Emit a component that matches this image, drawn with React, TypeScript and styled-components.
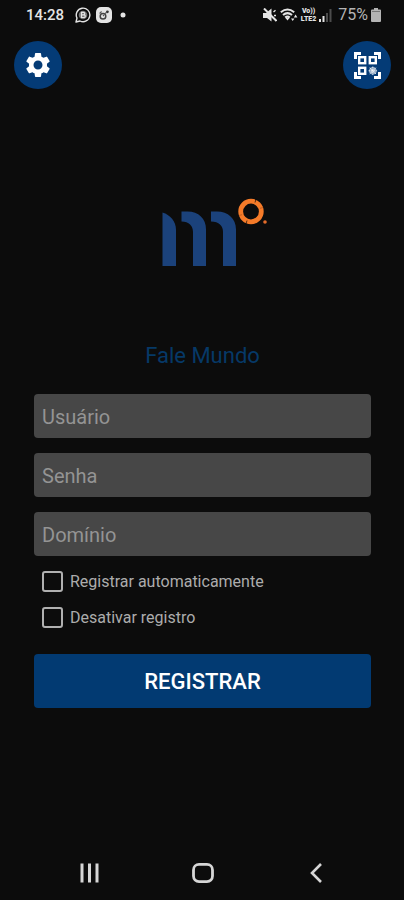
import React from "react";
import styled, { createGlobalStyle } from "styled-components";
import { MdSettings } from "react-icons/md";

const GlobalStyle = createGlobalStyle`
  *, *::before, *::after { box-sizing: border-box; }
  body {
    margin: 0;
    background: #0c0c0c;
    font-family: Roboto, "Liberation Sans", sans-serif;
  }
`;

const Screen = styled.div`
  min-height: 100vh;
  display: flex;
  flex-direction: column;
  background: #0c0c0c;
`;

const StatusBar = styled.header`
  display: flex;
  align-items: center;
  justify-content: space-between;
  height: 30px;
  padding: 0 23px 0 26px;
  color: #e4e4e4;
`;

const StatusGroup = styled.div<{ $gap: number }>`
  display: flex;
  align-items: center;
  gap: ${(p) => p.$gap}px;
`;

const Clock = styled.time`
  margin-right: 6px;
  font-size: 15px;
  line-height: 20px;
  font-weight: 500;
`;

const Battery = styled.span`
  margin-left: 3px;
  font-size: 16px;
  line-height: 20px;
  color: #b4b4b4;
`;

const Network = styled.span`
  display: flex;
  flex-direction: column;
  align-items: center;
  font-size: 7px;
  line-height: 8px;
  font-weight: 900;
`;

const Actions = styled.nav`
  display: flex;
  justify-content: space-between;
  padding: 11px 13px 0 14px;
`;

const RoundButton = styled.button`
  display: flex;
  align-items: center;
  justify-content: center;
  width: 48px;
  height: 48px;
  padding: 0;
  border: 0;
  border-radius: 50%;
  background: #043b76;
  color: #fff;
  cursor: pointer;
`;

const Main = styled.main`
  display: flex;
  flex-direction: column;
  padding: 109px 33px 0 34px;
`;

const Brand = styled.div`
  display: flex;
  justify-content: center;
  padding-left: 24px;
`;

const Title = styled.h1`
  margin: 75px 0 24px;
  text-align: center;
  font-size: 22px;
  line-height: 28px;
  font-weight: 400;
  color: #063967;
`;

const Form = styled.form`
  display: flex;
  flex-direction: column;
`;

const Fields = styled.div`
  display: grid;
  gap: 15px;
`;

const Field = styled.input`
  width: 100%;
  height: 44px;
  padding: 2px 8px 0;
  border: 0;
  border-radius: 4px;
  background: #474747;
  color: #e0e0e0;
  font-family: inherit;
  font-size: 20px;
  &::placeholder { color: #949494; opacity: 1; }
`;

const Options = styled.div`
  display: grid;
  gap: 15px;
  padding: 15px 8px 26px;
`;

const Option = styled.label`
  display: flex;
  align-items: center;
  gap: 7px;
  font-size: 16px;
  line-height: 21px;
  color: #acacac;
`;

const Check = styled.input`
  appearance: none;
  flex: none;
  width: 21px;
  height: 21px;
  margin: 0;
  border: 2px solid #b0b0b0;
  border-radius: 3px;
  &:checked { background: #043b76; }
`;

const Submit = styled.button`
  height: 54px;
  padding: 0;
  border: 0;
  border-radius: 4px;
  background: #023a72;
  color: #fff;
  font-family: inherit;
  font-size: 22px;
  font-weight: 500;
  cursor: pointer;
`;

const SystemNav = styled.nav`
  display: grid;
  grid-template-columns: repeat(3, 1fr);
  height: 54px;
  margin-top: auto;
  padding: 0 31px 0 33px;
`;

const NavButton = styled.button`
  display: flex;
  align-items: center;
  justify-content: center;
  padding: 0;
  border: 0;
  background: none;
  color: #d6d6d6;
`;

const ChatIcon = () => (
  <svg width="16" height="16" viewBox="0 0 16 16" fill="none" stroke="currentColor">
    <path d="M1 15l1-4A6.8 6.8 0 1 1 5 14z" strokeWidth="1.4" strokeLinejoin="round" />
    <circle cx="8" cy="8" r="4.3" fill="#777" stroke="none" />
    <path d="M6.5 5.3h2a1.2 1.2 0 0 1 0 2.5h-2zm0 2.5h2.4a1.3 1.3 0 0 1 0 2.7H6.5z" strokeWidth="1.2" />
  </svg>
);

const AppBadgeIcon = () => (
  <svg width="16" height="16" viewBox="0 0 16 16">
    <rect width="16" height="16" rx="5" fill="currentColor" />
    <circle cx="7" cy="9.2" r="2.8" fill="none" stroke="#444" strokeWidth="1.5" />
    <path d="M7 9l1-1M9 6.5l1.5-1M3.6 6.5l2-2" stroke="#555" strokeWidth="1.1" />
    <circle cx="11.4" cy="4.8" r="1.4" fill="#333" />
  </svg>
);

const DotIcon = () => (
  <svg width="6" height="6" viewBox="0 0 6 6">
    <circle cx="3" cy="3" r="2.5" fill="currentColor" />
  </svg>
);

const MuteIcon = () => (
  <svg width="14" height="14" viewBox="0 0 14 14">
    <path d="M0 5h3L8.500 0.500v13L4 10H0z" fill="currentColor" />
    <path d="M10.500 4l2-1.700M11 7.500h2" stroke="currentColor" strokeWidth="1.400" />
    <path d="M1 0.500l12.500 12.500" stroke="currentColor" strokeWidth="2" />
  </svg>
);

const WifiIcon = () => (
  <svg width="18" height="14" viewBox="0 0 18 14" fill="none" stroke="currentColor">
    <path d="M0.800 4.200Q7.500-1.300 14.200 4.200M3 7Q7.500 3.200 12 7M5.200 9.600Q7.500 7.600 9.800 9.600" strokeWidth="2" />
    <path d="M5.500 10h4L7.500 12.500zM11 10.500h3.400L12.700 13zM13.800 9.500h3.600L15.600 6.500z" fill="currentColor" stroke="none" />
  </svg>
);

const SignalIcon = () => (
  <svg width="13" height="13" viewBox="0 0 13 13" fill="currentColor">
    <path d="M0 10h2v3H0zM3.500 7h2v6h-2z" />
    <path d="M7 4h2v9H7zM10.500 0h2v13h-2z" fill="#4c4c4c" />
  </svg>
);

const BatteryIcon = () => (
  <svg width="10" height="14" viewBox="0 0 10 14" fill="#b4b4b4">
    <path d="M3 0h4v1.500h2a1 1 0 0 1 1 1V13a1 1 0 0 1-1 1H1a1 1 0 0 1-1-1V2.500a1 1 0 0 1 1-1h2z" />
    <path d="M1 3.500h8" stroke="#777" />
  </svg>
);

const QrIcon = () => (
  <svg width="27" height="27" viewBox="0 0 27 27" fill="none" stroke="currentColor">
    <path
      d="M0 0h7v3H3v4H0zM20 0h7v7h-3V3h-4zM0 20h3v4h4v3H0zM24 20h3v7h-7v-3h4z"
      fill="currentColor"
      stroke="none"
    />
    <g strokeWidth="2.400">
      <rect x="5.200" y="5.200" width="6" height="6" />
      <rect x="15.800" y="5.200" width="6" height="6" />
      <rect x="5.200" y="15.800" width="6" height="6" />
    </g>
    <circle cx="18.800" cy="18.800" r="3.800" fill="currentColor" stroke="none" opacity="0.6" />
    <path d="M18.800 14.500v8.600M14.500 18.800h8.600M15.700 15.700l6.200 6.200M21.900 15.700l-6.200 6.200" strokeDasharray="1.600 0.900" opacity="0.8" />
  </svg>
);

const Logo = () => (
  <svg width="105" height="69" viewBox="0 0 105 69" role="img" aria-label="Fale Mundo">
    <g fill="#1b427b">
      <path d="M0.500 14.500C8 17 14 23 14 32v36H0.500z" />
      <path d="M19.500 13.500H25.500c11 0 18.500 7 18.500 18v36.500H31V34c0-6-4-10.500-11.500-10.500z" />
      <path d="M49 13.500H55c11 0 19 7 19 18v36.500H61V34c0-6-4-10.500-12-10.500z" />
    </g>
    <circle cx="89" cy="13.500" r="10.300" fill="none" stroke="#f57b29" strokeWidth="4.800" />
    <path d="M93 4.500l1.200-4M85 22.500l-1.200 4" stroke="#0c0c0c" strokeWidth="0.700" />
    <path d="M77 17.500l3-0.800M98 10.300l3-0.800" stroke="#8a4518" strokeWidth="0.500" />
    <circle cx="103" cy="24" r="1.800" fill="#e46c2a" />
  </svg>
);

const RecentsIcon = () => (
  <svg width="19" height="20" viewBox="0 0 19 20" fill="none" stroke="currentColor" strokeWidth="3">
    <path d="M2 0.500v19M9.500 0.500v19M17 0.500v19" />
  </svg>
);

const HomeIcon = () => (
  <svg width="22" height="20" viewBox="0 0 22 20" fill="none" stroke="currentColor" strokeWidth="2.800">
    <rect x="1.500" y="1.400" width="19" height="17.200" rx="5.500" />
  </svg>
);

const BackIcon = () => (
  <svg width="12" height="20" viewBox="0 0 12 20" fill="none" stroke="currentColor" strokeWidth="2.600">
    <path d="M11 1L2 10l9 9" />
  </svg>
);

const fields = [
  { label: "Usuário", name: "username", type: "text" },
  { label: "Senha", name: "password", type: "password" },
  { label: "Domínio", name: "domain", type: "text" },
];

const options = [
  { label: "Registrar automaticamente", name: "auto" },
  { label: "Desativar registro", name: "disable" },
];

export default function App() {
  return (
    <>
      <GlobalStyle />
      <Screen>
        <StatusBar>
          <StatusGroup $gap={8}>
            <StatusGroup $gap={5}>
              <Clock>14:28</Clock>
              <ChatIcon />
              <AppBadgeIcon />
            </StatusGroup>
            <DotIcon />
          </StatusGroup>
          <StatusGroup $gap={3}>
            <MuteIcon />
            <WifiIcon />
            <Network>
              <span>Vo))</span>
              <span>LTE2</span>
            </Network>
            <SignalIcon />
            <Battery>75%</Battery>
            <BatteryIcon />
          </StatusGroup>
        </StatusBar>
        <Actions>
          <RoundButton type="button" aria-label="Configurações">
            <MdSettings size={30} />
          </RoundButton>
          <RoundButton type="button" aria-label="Ler código QR">
            <QrIcon />
          </RoundButton>
        </Actions>
        <Main>
          <Brand>
            <Logo />
          </Brand>
          <Title>Fale Mundo</Title>
          <Form onSubmit={(e: React.FormEvent) => e.preventDefault()}>
            <Fields>
              {fields.map((f) => (
                <Field key={f.name} name={f.name} type={f.type} placeholder={f.label} aria-label={f.label} />
              ))}
            </Fields>
            <Options>
              {options.map((o) => (
                <Option key={o.name}>
                  <Check type="checkbox" name={o.name} />
                  {o.label}
                </Option>
              ))}
            </Options>
            <Submit type="submit">REGISTRAR</Submit>
          </Form>
        </Main>
        <SystemNav>
          <NavButton type="button" aria-label="Recentes">
            <RecentsIcon />
          </NavButton>
          <NavButton type="button" aria-label="Início">
            <HomeIcon />
          </NavButton>
          <NavButton type="button" aria-label="Voltar">
            <BackIcon />
          </NavButton>
        </SystemNav>
      </Screen>
    </>
  );
}
